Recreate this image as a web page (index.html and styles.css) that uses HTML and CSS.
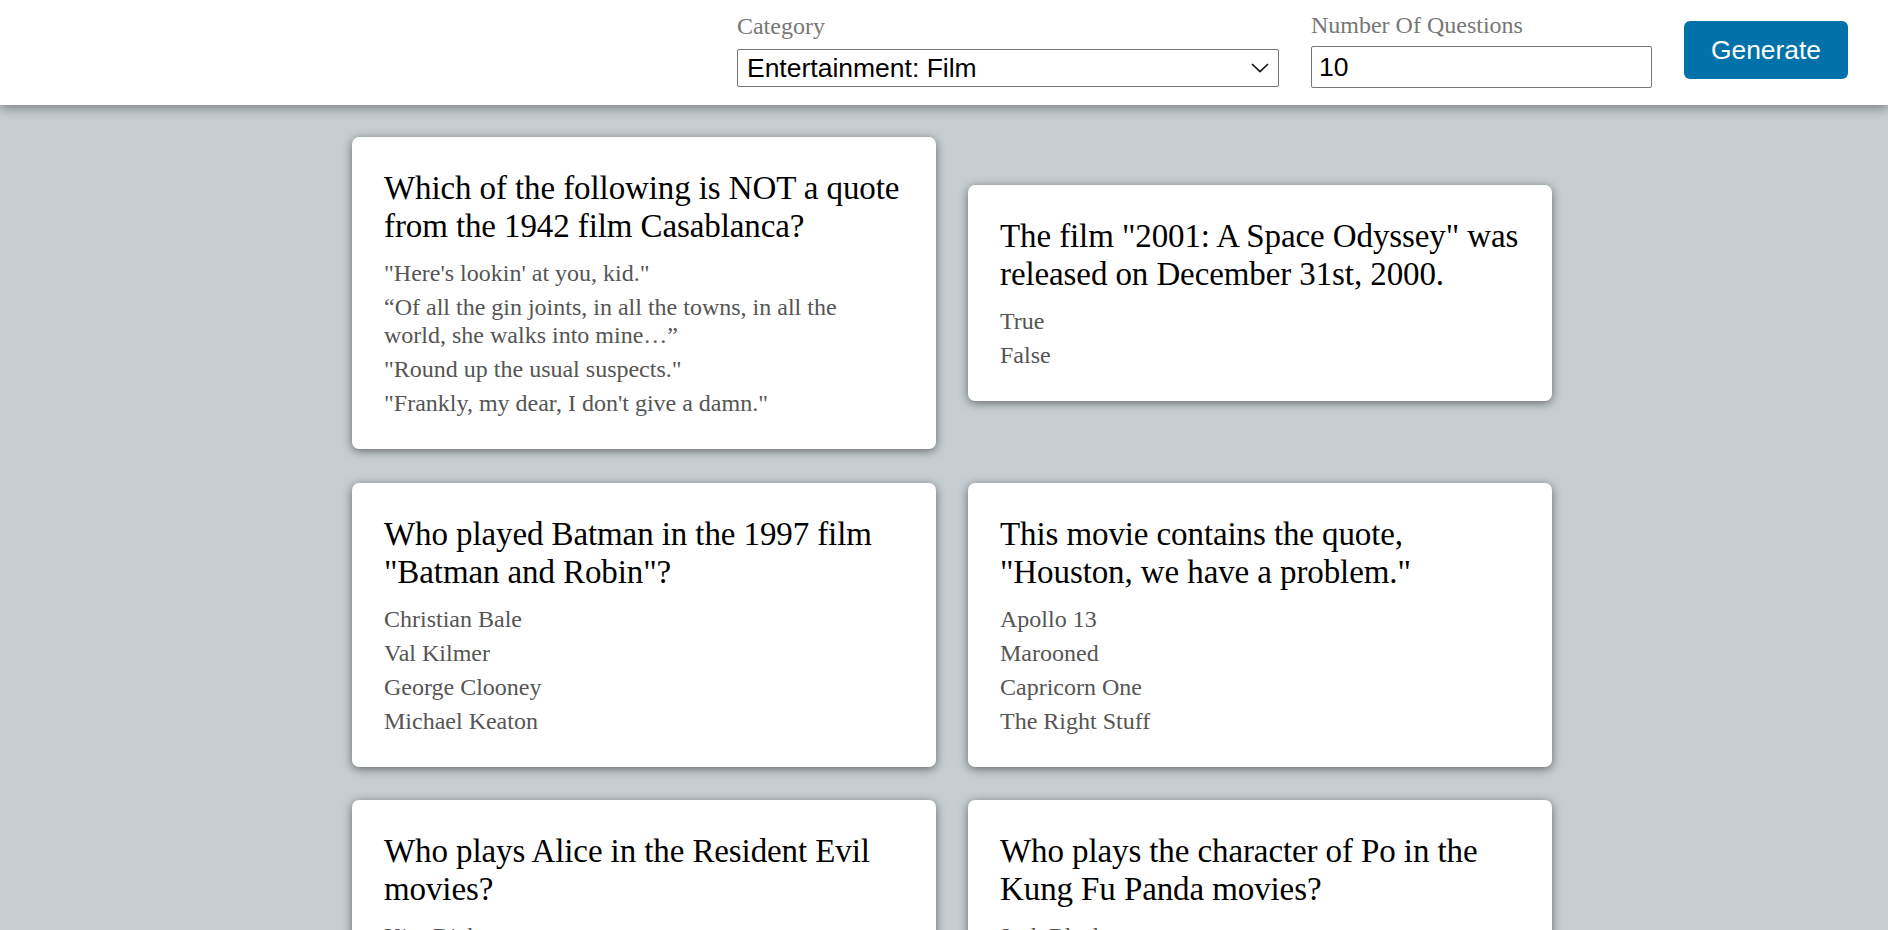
FILE: index.html
```html
<!DOCTYPE html>
<html lang="en">
<head>
<meta charset="utf-8">
<title>Trivia Generator</title>
<link rel="stylesheet" href="styles.css">
</head>
<body>
<header class="topbar">
  <div class="field field-category">
    <label class="field-label label-category" for="category">Category</label>
    <div class="select-wrap">
      <select id="category" class="select">
        <option>Entertainment: Film</option>
      </select>
      <svg class="chevron" width="18" height="10" viewBox="0 0 18 10" aria-hidden="true"><path d="M1 1 L9 8.6 L17 1" fill="none" stroke="#111" stroke-width="1.6"/></svg>
    </div>
  </div>
  <div class="field field-count">
    <label class="field-label label-count" for="count">Number Of Questions</label>
    <input id="count" class="input" type="text" value="10">
  </div>
  <button class="btn" type="button">Generate</button>
</header>

<main class="board">
  <article class="card">
    <h2 class="question">Which of the following is NOT a quote from the 1942 film Casablanca?</h2>
    <ul class="answers">
      <li>"Here's lookin' at you, kid."</li>
      <li>“Of all the gin joints, in all the towns, in all the world, she walks into mine…”</li>
      <li>"Round up the usual suspects."</li>
      <li>"Frankly, my dear, I don't give a damn."</li>
    </ul>
  </article>
  <article class="card">
    <h2 class="question">The film "2001: A Space Odyssey" was released on December 31st, 2000.</h2>
    <ul class="answers">
      <li>True</li>
      <li>False</li>
    </ul>
  </article>
  <article class="card">
    <h2 class="question">Who played Batman in the 1997 film "Batman and Robin"?</h2>
    <ul class="answers">
      <li>Christian Bale</li>
      <li>Val Kilmer</li>
      <li>George Clooney</li>
      <li>Michael Keaton</li>
    </ul>
  </article>
  <article class="card">
    <h2 class="question">This movie contains the quote, "Houston, we have a problem."</h2>
    <ul class="answers">
      <li>Apollo 13</li>
      <li>Marooned</li>
      <li>Capricorn One</li>
      <li>The Right Stuff</li>
    </ul>
  </article>
  <article class="card">
    <h2 class="question">Who plays Alice in the Resident Evil movies?</h2>
    <ul class="answers">
      <li>Kim Dickens</li>
      <li>Milla Jovovich</li>
      <li>Madison Derpe</li>
      <li>Milla Johnson</li>
    </ul>
  </article>
  <article class="card">
    <h2 class="question">Who plays the character of Po in the Kung Fu Panda movies?</h2>
    <ul class="answers">
      <li>Jack Black</li>
      <li>Seth Rogen</li>
      <li>Dustin Hoffman</li>
      <li>Jackie Chan</li>
    </ul>
  </article>
</main>
</body>
</html>
```

FILE: styles.css
```css
html {
  scrollbar-width: none;
}

body {
  margin: 0;
  background: #c6ced1;
  font-family: "Liberation Serif", "Times New Roman", serif;
}

.topbar {
  position: relative;
  z-index: 1;
  box-sizing: border-box;
  height: 105px;
  padding: 11px 40px 16px;
  display: flex;
  justify-content: flex-end;
  align-items: center;
  gap: 32px;
  background: #ffffff;
  box-shadow: 0 2px 12px rgba(0, 0, 0, 0.45);
}

.field {
  display: flex;
  flex-direction: column;
}

.field-category {
  width: 542px;
}

.field-count {
  width: 341px;
}

.field-label {
  font-size: 24px;
  line-height: 27.6px;
  color: #777777;
}

.label-category {
  margin-bottom: 9px;
}

.label-count {
  margin-bottom: 7px;
}

.select-wrap {
  position: relative;
}

.select {
  display: block;
  box-sizing: border-box;
  width: 542px;
  height: 38px;
  margin: 0;
  padding: 0 0 0 9px;
  border: 1px solid #767676;
  border-radius: 2px;
  background: #ffffff;
  color: #000000;
  font-family: "Liberation Sans", Arial, sans-serif;
  font-size: 26.5px;
  appearance: none;
  -webkit-appearance: none;
}

.chevron {
  position: absolute;
  right: 10px;
  top: 14px;
  pointer-events: none;
}

.input {
  display: block;
  box-sizing: border-box;
  width: 341px;
  height: 42px;
  margin: 0;
  padding: 0 7px;
  border: 1px solid #767676;
  border-radius: 2px;
  background: #ffffff;
  color: #000000;
  font-family: "Liberation Sans", Arial, sans-serif;
  font-size: 26.5px;
}

.btn {
  height: 58px;
  padding: 0 27px;
  border: none;
  border-radius: 6px;
  background: #0071a9;
  color: #ffffff;
  font-family: "Liberation Sans", Arial, sans-serif;
  font-size: 26.4px;
  cursor: pointer;
}

.board {
  display: grid;
  grid-template-columns: 584px 584px;
  column-gap: 32px;
  row-gap: 33.5px;
  align-items: center;
  width: 1200px;
  margin: 32px 0 0 calc(50% - 592px);
}

.card {
  box-sizing: border-box;
  padding: 32px;
  background: #ffffff;
  border-radius: 7px;
  box-shadow: 0 2px 10px rgba(0, 0, 0, 0.5);
}

.question {
  margin: 0 0 14px;
  font-size: 33px;
  line-height: 38px;
  font-weight: normal;
  letter-spacing: -0.1px;
  color: #000000;
}

.answers {
  list-style: none;
  margin: 0;
  padding: 0;
  display: flex;
  flex-direction: column;
  gap: 6px;
}

.answers li {
  font-size: 24px;
  line-height: 28px;
  color: #555555;
}
```
